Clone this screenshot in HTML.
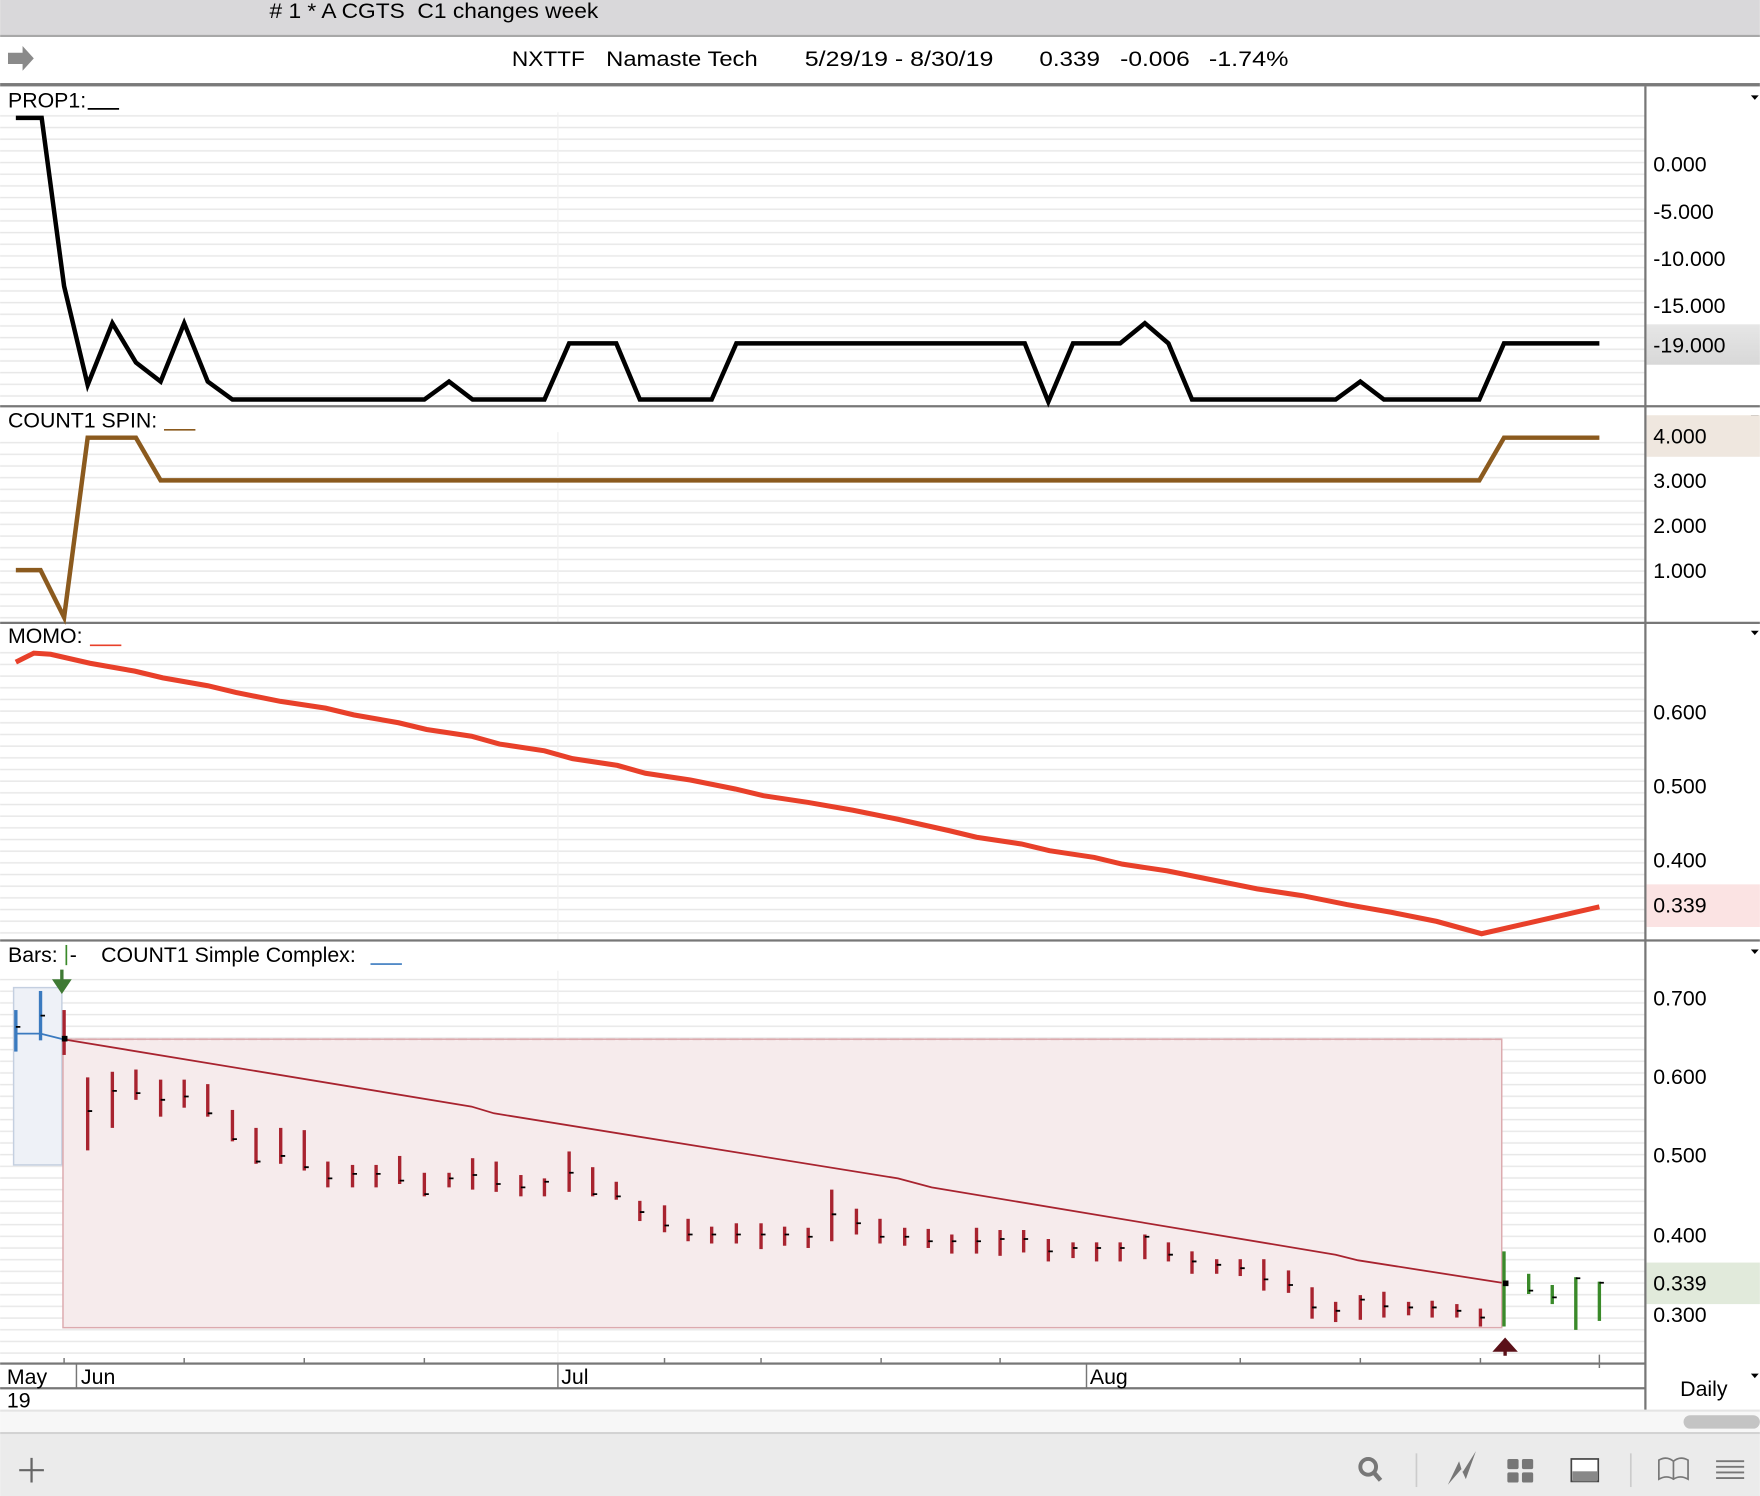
<!DOCTYPE html>
<html><head><meta charset="utf-8"><style>
html,body{margin:0;padding:0;background:#fff;overflow:hidden}
svg{display:block}
text{font-family:"Liberation Sans",sans-serif;font-size:19px;fill:#000;white-space:pre}
</style></head><body>
<svg width="1760" height="1496" viewBox="0 0 1568 1333" xmlns="http://www.w3.org/2000/svg" xml:space="preserve">
<defs>
<pattern id="g" x="0" y="0" width="10" height="10.4" patternUnits="userSpaceOnUse">
<rect width="10" height="10.4" fill="#fff"/><rect y="9" width="10" height="1.3" fill="#e8e8e8"/></pattern>
<linearGradient id="sh" x1="0" y1="0" x2="0" y2="1"><stop offset="0" stop-color="#e6e6e6"/><stop offset="1" stop-color="#d8d8d8"/></linearGradient>
</defs>
<rect x="0" y="0" width="1568" height="31" fill="#d9d8da"/>
<rect x="0" y="31" width="1568" height="2" fill="#a8a8a8"/>
<text x="240" y="16" font-size="19" fill="#222" textLength="293" lengthAdjust="spacingAndGlyphs"># 1 * A CGTS  C1 changes week</text>
<rect x="0" y="33" width="1568" height="42" fill="#fff"/>
<path d="M7 47 H20 V41 L30 52 L20 63 V57 H7 Z" fill="#8a8a8a"/>
<g font-size="20">
<text x="456" y="59" font-size="20" textLength="65" lengthAdjust="spacingAndGlyphs">NXTTF</text>
<text x="540" y="59" font-size="20" textLength="135" lengthAdjust="spacingAndGlyphs">Namaste Tech</text>
<text x="717" y="59" font-size="20" textLength="168" lengthAdjust="spacingAndGlyphs">5/29/19 - 8/30/19</text>
<text x="926" y="59" font-size="20" textLength="54" lengthAdjust="spacingAndGlyphs">0.339</text>
<text x="998" y="59" font-size="20" textLength="62" lengthAdjust="spacingAndGlyphs">-0.006</text>
<text x="1077" y="59" font-size="20" textLength="71" lengthAdjust="spacingAndGlyphs">-1.74%</text>
</g>
<rect x="0" y="74" width="1568" height="3" fill="#7a7a7a"/>

<rect x="0" y="102" width="1466" height="260" fill="url(#g)"/>
<rect x="0" y="390" width="1466" height="165" fill="url(#g)"/>
<rect x="0" y="580" width="1466" height="258" fill="url(#g)"/>
<rect x="0" y="865" width="1466" height="350" fill="url(#g)"/>
<g stroke="#f0f0f0" stroke-width="1"><line x1="497" y1="100" x2="497" y2="362"/><line x1="497" y1="385" x2="497" y2="555"/><line x1="497" y1="580" x2="497" y2="838"/><line x1="497" y1="865" x2="497" y2="1215"/></g>

<g fill="#777"><rect x="0" y="361" width="1568" height="2"/><rect x="0" y="554" width="1568" height="2"/><rect x="0" y="837" width="1568" height="2"/><rect x="1465" y="77" width="2" height="1180"/></g>

<text x="7" y="96">PROP1:</text><line x1="78" y1="97" x2="106" y2="97" stroke="#000" stroke-width="1.5"/>
<path d="M1560 85 h7 l-3.5 4z" fill="#000"/>
<polyline fill="none" stroke="#000" stroke-width="4" points="14,105 37,105 57,255 78,343 100,288 121,323 143,340 164,288 185,340 207,356 378,356 400,340 421,356 485,356 507,306 549,306 570,356 634,356 656,306 913,306 934,358 956,306 998,306 1020,288 1041,306 1062,356 1190,356 1212,340 1233,356 1318,356 1340,306 1425,306"/>
<rect x="1467" y="289" width="101" height="36" fill="url(#sh)"/>
<g><text x="1473" y="153">0.000</text><text x="1473" y="195">-5.000</text><text x="1473" y="237">-10.000</text><text x="1473" y="279">-15.000</text><text x="1473" y="314">-19.000</text></g>

<text x="7" y="381">COUNT1 SPIN:</text><line x1="146" y1="383" x2="174" y2="383" stroke="#8b5a1e" stroke-width="1.5"/>
<path d="M1560 370 h7 l-3.5 4z" fill="#000"/>
<rect x="1467" y="370" width="101" height="37" fill="#efe7df"/>
<polyline fill="none" stroke="#8b5a1e" stroke-width="4" points="14,508 36,508 57,550 78,390 121,390 143,428 1318,428 1340,390 1425,390"/>
<text x="1473" y="395" fill="#6b3f10">4.000</text><text x="1473" y="435">3.000</text><text x="1473" y="475">2.000</text><text x="1473" y="515">1.000</text>

<text x="7" y="573">MOMO:</text><line x1="80" y1="575" x2="108" y2="575" stroke="#e8402a" stroke-width="1.5"/>
<path d="M1560 562 h7 l-3.5 4z" fill="#000"/>
<rect x="1467" y="788" width="101" height="38" fill="#fbe3e3"/>
<polyline fill="none" stroke="#e8402a" stroke-width="4.5" points="14,590 30,582 45,583 80,591 120,598 145,604 185,611 210,617 250,625 290,631 315,637 355,644 380,650 420,656 445,663 485,669 510,676 550,682 575,689 615,695 655,703 680,709 720,715 760,722 800,730 845,740 870,746 910,752 935,758 975,764 1000,770 1040,776 1080,784 1120,792 1160,798 1200,806 1240,813 1280,821 1320,832 1425,808"/>
<text x="1473" y="641">0.600</text><text x="1473" y="707">0.500</text><text x="1473" y="773">0.400</text><text x="1473" y="813" fill="#b0201a">0.339</text>

<text x="7" y="857">Bars:</text><line x1="59" y1="842" x2="59" y2="860" stroke="#3a8a2a" stroke-width="1.5"/><text x="62" y="857">-</text>
<text x="90" y="857">COUNT1 Simple Complex:</text><line x1="330" y1="859" x2="358" y2="859" stroke="#3a7abf" stroke-width="1.5"/>
<path d="M1560 846 h7 l-3.5 4z" fill="#000"/>
<rect x="12" y="880" width="43" height="158" fill="#eef1f7" stroke="#c4cfe0" stroke-width="1.3"/>
<rect x="56" y="926" width="1282" height="257" fill="#f6ebec" stroke="#dcaaae" stroke-width="1.3"/>
<line x1="56" y1="926" x2="1338" y2="926" stroke="#dcaaae" stroke-width="1.5" stroke-dasharray="8,3"/>
<polyline fill="none" stroke="#a8232f" stroke-width="1.6" points="56,926 420,986 440,992 800,1050 830,1058 1190,1118 1210,1123 1338,1143"/>
<polyline fill="none" stroke="#3a7abf" stroke-width="1.6" points="14,921 36,921 56,926"/>
<path d="M55 864 V876 M49 874 h12 l-6 9z" stroke="#3f7a34" stroke-width="3" fill="#3f7a34"/>
<rect x="1467" y="1125" width="101" height="37" fill="#e1eadb"/>
<g stroke-width="3">
<g stroke="#3a7abf"><line x1="14" y1="900" x2="14" y2="937"/><line x1="36" y1="883" x2="36" y2="927"/></g>
<g stroke="#a8232f">
<line x1="57" y1="900" x2="57" y2="940"/><line x1="78" y1="960" x2="78" y2="1025"/><line x1="100" y1="955" x2="100" y2="1005"/><line x1="121" y1="953" x2="121" y2="980"/><line x1="143" y1="962" x2="143" y2="995"/><line x1="164" y1="962" x2="164" y2="987"/><line x1="185" y1="966" x2="185" y2="995"/><line x1="207" y1="989" x2="207" y2="1017"/><line x1="228" y1="1005" x2="228" y2="1037"/><line x1="250" y1="1005" x2="250" y2="1037"/><line x1="271" y1="1007" x2="271" y2="1043"/><line x1="292" y1="1035" x2="292" y2="1058"/><line x1="314" y1="1038" x2="314" y2="1058"/><line x1="335" y1="1038" x2="335" y2="1058"/><line x1="356" y1="1030" x2="356" y2="1055"/><line x1="378" y1="1045" x2="378" y2="1066"/><line x1="400" y1="1045" x2="400" y2="1058"/><line x1="421" y1="1032" x2="421" y2="1060"/><line x1="442" y1="1035" x2="442" y2="1062"/><line x1="464" y1="1047" x2="464" y2="1066"/><line x1="485" y1="1050" x2="485" y2="1066"/><line x1="507" y1="1026" x2="507" y2="1062"/><line x1="528" y1="1040" x2="528" y2="1066"/><line x1="549" y1="1053" x2="549" y2="1069"/><line x1="570" y1="1070" x2="570" y2="1088"/><line x1="592" y1="1074" x2="592" y2="1098"/><line x1="613" y1="1086" x2="613" y2="1106"/><line x1="634" y1="1093" x2="634" y2="1108"/><line x1="656" y1="1090" x2="656" y2="1108"/><line x1="678" y1="1090" x2="678" y2="1113"/><line x1="699" y1="1093" x2="699" y2="1110"/><line x1="720" y1="1094" x2="720" y2="1112"/><line x1="741" y1="1060" x2="741" y2="1106"/><line x1="763" y1="1077" x2="763" y2="1100"/><line x1="784" y1="1086" x2="784" y2="1108"/><line x1="806" y1="1094" x2="806" y2="1110"/><line x1="827" y1="1095" x2="827" y2="1112"/><line x1="848" y1="1100" x2="848" y2="1117"/><line x1="870" y1="1094" x2="870" y2="1117"/><line x1="891" y1="1096" x2="891" y2="1119"/><line x1="912" y1="1096" x2="912" y2="1116"/><line x1="934" y1="1104" x2="934" y2="1124"/><line x1="956" y1="1107" x2="956" y2="1121"/><line x1="977" y1="1107" x2="977" y2="1124"/><line x1="998" y1="1107" x2="998" y2="1124"/><line x1="1020" y1="1100" x2="1020" y2="1122"/><line x1="1041" y1="1107" x2="1041" y2="1124"/><line x1="1062" y1="1115" x2="1062" y2="1135"/><line x1="1084" y1="1122" x2="1084" y2="1135"/><line x1="1105" y1="1122" x2="1105" y2="1137"/><line x1="1126" y1="1122" x2="1126" y2="1150"/><line x1="1148" y1="1132" x2="1148" y2="1152"/><line x1="1169" y1="1147" x2="1169" y2="1175"/><line x1="1190" y1="1160" x2="1190" y2="1178"/><line x1="1212" y1="1154" x2="1212" y2="1176"/><line x1="1233" y1="1151" x2="1233" y2="1174"/><line x1="1255" y1="1160" x2="1255" y2="1172"/><line x1="1276" y1="1159" x2="1276" y2="1174"/><line x1="1298" y1="1162" x2="1298" y2="1174"/><line x1="1319" y1="1166" x2="1319" y2="1182"/>
</g>
<g stroke="#3a8a2a"><line x1="1340" y1="1115" x2="1340" y2="1182"/><line x1="1362" y1="1135" x2="1362" y2="1153"/><line x1="1383" y1="1145" x2="1383" y2="1162"/><line x1="1404" y1="1138" x2="1404" y2="1185"/><line x1="1425" y1="1142" x2="1425" y2="1177"/></g>
</g>
<g stroke="#000" stroke-width="1.6">
<path d="M14 915h4M36 905h4M78 990h4M100 972h4M121 974h4M143 980h4M164 977h4M185 992h4M207 1015h4M228 1035h4M250 1030h4M271 1040h4M292 1050h4M314 1046h4M335 1046h4M356 1052h4M378 1064h4M400 1050h4M421 1047h4M442 1055h4M464 1058h4M485 1053h4M507 1045h4M528 1064h4M549 1066h4M570 1080h4M592 1092h4M613 1100h4M634 1100h4M656 1100h4M678 1100h4M699 1100h4M720 1102h4M741 1082h4M763 1090h4M784 1102h4M806 1102h4M827 1106h4M848 1106h4M870 1106h4M891 1104h4M912 1104h4M934 1115h4M956 1112h4M977 1112h4M998 1112h4M1020 1102h4M1041 1118h4M1062 1124h4M1084 1127h4M1105 1130h4M1126 1140h4M1148 1145h4M1169 1165h4M1190 1168h4M1212 1158h4M1233 1164h4M1255 1165h4M1276 1165h4M1298 1168h4M1319 1174h4M1362 1150h4M1383 1156h4M1404 1139h4M1425 1143h4"/>
</g>
<rect x="55" y="923" width="5" height="5" fill="#000"/><rect x="1339" y="1141" width="5" height="5" fill="#000"/>
<path d="M1341 1208 V1200 M1333 1203 l8 -9 l8 9z" stroke="#5a1018" stroke-width="3" fill="#5a1018"/>
<text x="1473" y="896">0.700</text><text x="1473" y="966">0.600</text><text x="1473" y="1036">0.500</text><text x="1473" y="1107">0.400</text><text x="1473" y="1150" fill="#2a5e1e">0.339</text><text x="1473" y="1178">0.300</text>

<rect x="0" y="1214" width="1466" height="2" fill="#777"/>
<rect x="0" y="1236" width="1466" height="2" fill="#777"/>
<g stroke="#777" stroke-width="1.3">
<path d="M57 1210v5M164 1210v5M271 1210v5M378 1210v5M592 1210v5M678 1210v5M785 1210v5M891 1210v5M1105 1210v5M1212 1210v5M1319 1210v5M1425 1207v12M68 1215v22M497 1215v22M968 1215v22"/>
</g>
<text x="6" y="1233">May</text><text x="72" y="1233">Jun</text><text x="500" y="1233">Jul</text><text x="971" y="1233">Aug</text>
<text x="6" y="1254">19</text>
<text x="1497" y="1244">Daily</text><path d="M1560 1224 h7 l-3.5 4z" fill="#000"/>
<rect x="0" y="1256" width="1568" height="2" fill="#e4e4e4"/>
<rect x="0" y="1258" width="1568" height="18" fill="#f7f7f7"/>
<rect x="1500" y="1261" width="68" height="12" rx="6" fill="#c4c4c4"/>
<rect x="0" y="1276" width="1568" height="2" fill="#d2d2d2"/>
<rect x="0" y="1278" width="1568" height="55" fill="#ebebeb"/>
<path d="M28 1299 V1321 M17 1310 H39" stroke="#666" stroke-width="2"/>
<circle cx="1219" cy="1307" r="7" fill="none" stroke="#777" stroke-width="3.5"/><line x1="1224" y1="1312" x2="1230" y2="1319" stroke="#777" stroke-width="4"/>
<line x1="1262" y1="1295" x2="1262" y2="1325" stroke="#ccc" stroke-width="1.5"/>
<path d="M1290 1323 L1300 1302 L1303 1312 L1315 1293 L1306 1318 L1302 1309 Z" fill="#777"/>
<g fill="#777"><rect x="1343" y="1300" width="10" height="9" rx="1.5"/><rect x="1356" y="1300" width="10" height="9" rx="1.5"/><rect x="1343" y="1312" width="10" height="9" rx="1.5"/><rect x="1356" y="1312" width="10" height="9" rx="1.5"/></g>
<rect x="1400" y="1300" width="24" height="20" fill="#fff" stroke="#444" stroke-width="1.5"/><rect x="1401" y="1311" width="22" height="9" fill="#888"/>
<line x1="1453" y1="1295" x2="1453" y2="1325" stroke="#ccc" stroke-width="1.5"/>
<path d="M1478 1318 V1301 Q1485 1297 1491 1302 Q1497 1297 1504 1301 V1318 Q1497 1314 1491 1318 Q1485 1314 1478 1318 Z M1491 1302 V1318" fill="none" stroke="#777" stroke-width="1.5"/>
<g stroke="#777" stroke-width="1.6"><path d="M1529 1302h25M1529 1307h25M1529 1312h25M1529 1317h25"/></g>
</svg>
</body></html>
